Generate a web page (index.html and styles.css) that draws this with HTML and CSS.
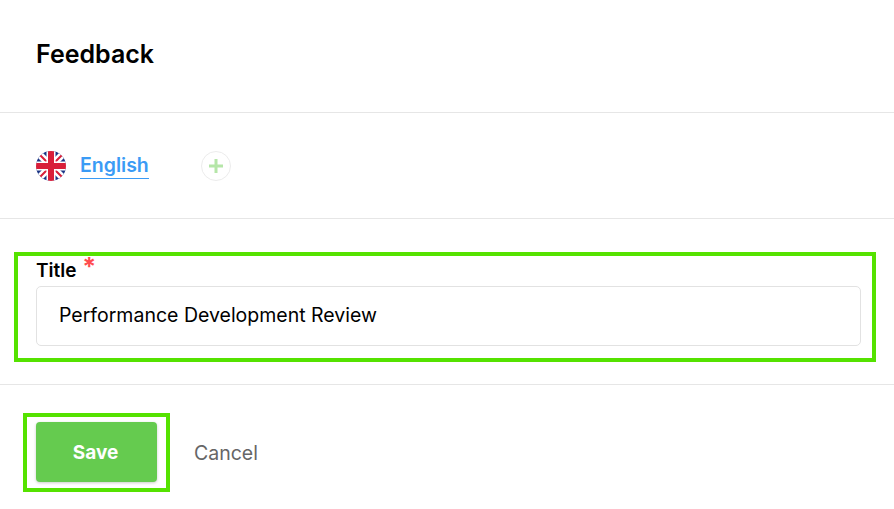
FILE: index.html
```html
<!DOCTYPE html>
<html lang="en">
<head>
    <meta charset="UTF-8">
    <meta name="viewport" content="width=device-width, initial-scale=1.0">
    <title>Feedback</title>
    <link rel="stylesheet" href="styles.css">
</head>
<body>
    <header class="page-header">
        <h1>Feedback</h1>
    </header>

    <div class="lang-row">
        <svg class="flag" width="30" height="30" viewBox="0 0 30 30">
            <defs>
                <clipPath id="flagClip"><circle cx="15" cy="15" r="15"/></clipPath>
            </defs>
            <g clip-path="url(#flagClip)">
                <rect width="30" height="30" fill="#1b3585"/>
                <path d="M0 0L30 30M30 0L0 30" stroke="#fff" stroke-width="7"/>
                <path d="M0 0L30 30M30 0L0 30" stroke="#d81f3a" stroke-width="2"/>
                <path d="M15 0V30M0 15H30" stroke="#fff" stroke-width="9"/>
                <path d="M15 0V30M0 15H30" stroke="#d81f3a" stroke-width="6"/>
            </g>
        </svg>
        <a class="lang-link" href="#">English</a>
        <button class="add-lang" type="button" aria-label="Add language">
            <svg width="16" height="16" viewBox="0 0 16 16">
                <path d="M8 1V15M1 8H15" stroke="#b5e6a8" stroke-width="3"/>
            </svg>
        </button>
    </div>

    <form class="feedback-form">
        <div class="field-section">
            <div class="highlight title-box">
                <label class="field-label" for="title">Title <span class="required">*</span></label>
                <input class="text-input" id="title" type="text" value="Performance Development Review">
            </div>
        </div>
        <div class="actions">
            <div class="highlight save-box">
                <button class="save-btn" type="submit">Save</button>
            </div>
            <a class="cancel" href="#">Cancel</a>
        </div>
    </form>
</body>
</html>
```

FILE: styles.css
```css
* {
    box-sizing: border-box;
}
body {
    margin: 0;
    font-family: "Inter", sans-serif;
    background-color: white;
    color: black;
    overflow: hidden;
}
.page-header {
    height: 113px;
    padding: 39px 36px 0;
    border-bottom: 1px solid #e6e6e6;
}
h1 {
    margin: 0;
    font-size: 25px;
    line-height: 30px;
    font-weight: 600;
}
.lang-row {
    display: flex;
    align-items: center;
    height: 106px;
    padding: 0 36px;
    border-bottom: 1px solid #e6e6e6;
}
.flag {
    margin-right: 14px;
}
.lang-link {
    color: #3a9bf5;
    font-size: 19.5px;
    font-weight: 600;
    line-height: 26px;
    text-decoration: none;
    border-bottom: 1px solid #3a9bf5;
}
.add-lang {
    display: flex;
    align-items: center;
    justify-content: center;
    width: 30px;
    height: 30px;
    margin-left: 52px;
    padding: 0;
    background: white;
    border: 1px solid #ececec;
    border-radius: 50%;
}
.field-section {
    height: 166px;
    padding: 33px 18px 0 14px;
    border-bottom: 1px solid #e6e6e6;
}
.highlight {
    border: 4px solid #55e200;
}
.title-box {
    height: 110px;
    padding: 0 11px 0 18px;
}
.field-label {
    display: block;
    font-size: 19px;
    font-weight: 600;
    line-height: 30px;
}
.required {
    margin-left: 1px;
    color: #ff4d4f;
    font-size: 25px;
    font-weight: 700;
    line-height: 0;
    vertical-align: 1px;
}
.text-input {
    display: block;
    width: 100%;
    height: 60px;
    padding: 0 22px 2px;
    font-family: inherit;
    font-size: 19.5px;
    color: black;
    border: 1px solid #e2e2e2;
    border-radius: 5px;
}
.actions {
    display: flex;
    align-items: center;
    padding: 28px 0 0 23px;
}
.save-box {
    padding: 5px 9px;
    width: 147px;
    height: 79px;
    margin-right: 24px;
}
.save-btn {
    width: 121px;
    height: 60px;
    padding: 0 2px 0 0;
    font-family: inherit;
    font-size: 19px;
    font-weight: 700;
    color: white;
    background-color: #65cb4f;
    border: none;
    border-radius: 4px;
    box-shadow: 0 1px 3px rgba(0, 0, 0, 0.2);
}
.cancel {
    color: #666;
    font-size: 19.5px;
    text-decoration: none;
}
```
